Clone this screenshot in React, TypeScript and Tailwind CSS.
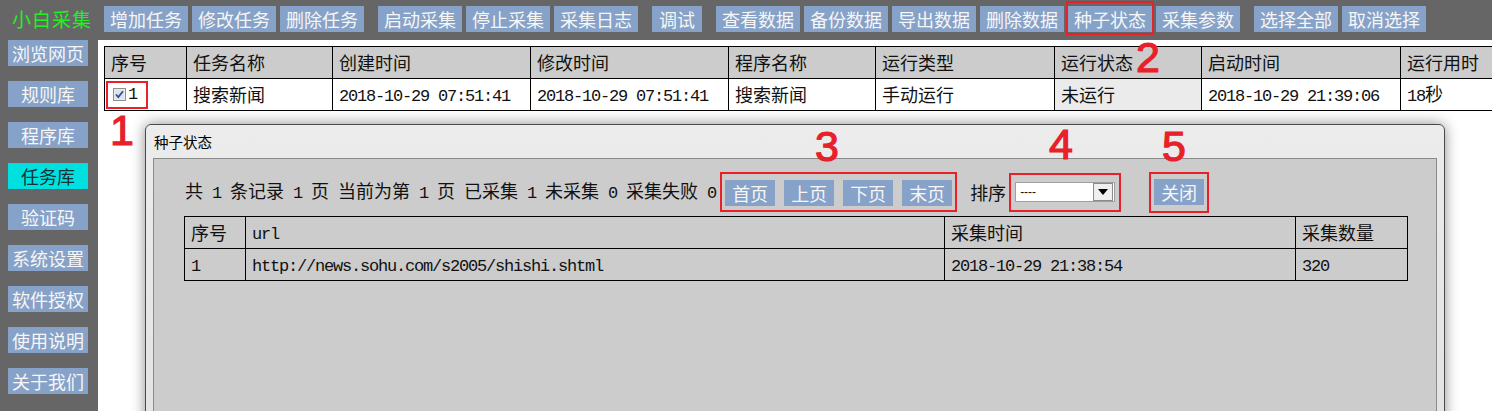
import type { ReactNode } from "react";

// half-width digits / latin, SimSun-like spacing (9px advance)
function M({ children }: { children: ReactNode }) {
  return (
    <span className="font-['Liberation_Mono',monospace] text-[17px] tracking-[-1.2px] whitespace-pre">
      {children}
    </span>
  );
}

function Btn({ label, w = "w-[84px]" }: { label: string; w?: string }) {
  return (
    <div
      className={`${w} h-[26px] bg-[#86a2c8] text-[#f6f6f6] text-[18px] leading-[26px] text-center`}
    >
      {label}
    </div>
  );
}

function Num({ n, className }: { n: string; className: string }) {
  return (
    <span
      className={`absolute font-['Liberation_Sans',Arial,sans-serif] text-[43px] leading-none text-[#e8202a] [-webkit-text-stroke:1.2px_#e8202a] ${className}`}
    >
      {n}
    </span>
  );
}

const side = ["浏览网页", "规则库", "程序库", "任务库", "验证码", "系统设置", "软件授权", "使用说明", "关于我们"];

function Checkbox() {
  return (
    <svg width="13" height="13" viewBox="0 0 13 13">
      <rect x="0.5" y="0.5" width="12" height="12" fill="#e8ebef" stroke="#8e8f8f" />
      <rect x="2" y="2" width="9" height="9" fill="#dfe4ea" />
      <path d="M3 6.5 L5.3 9 L10 3.2" fill="none" stroke="#2f4f9a" strokeWidth="1.8" />
    </svg>
  );
}

const th = "border border-black h-[32px] pl-[6px] text-left font-normal";
const td = "border border-black h-[32px] pl-[6px]";

export default function App() {
  return (
    <div className="relative w-[1492px] h-[411px] overflow-hidden bg-[#666666] font-['Noto_Sans_CJK_SC',sans-serif] text-[#111]">
      {/* top toolbar */}
      <div className="flex items-center h-[40px] pt-[6px] pb-[8px]">
        <div className="w-[104px] pl-[12px] text-[19px] text-[#22f022] tracking-[1px] whitespace-nowrap">
          小白采集
        </div>
        <div className="flex gap-[4px]">
          <Btn label="增加任务" />
          <Btn label="修改任务" />
          <Btn label="删除任务" />
        </div>
        <div className="flex gap-[4px] ml-[14px]">
          <Btn label="启动采集" />
          <Btn label="停止采集" />
          <Btn label="采集日志" />
        </div>
        <div className="ml-[14px]">
          <Btn label="调试" w="w-[50px]" />
        </div>
        <div className="flex gap-[4px] ml-[14px]">
          <Btn label="查看数据" />
          <Btn label="备份数据" />
          <Btn label="导出数据" />
          <Btn label="删除数据" />
          <div className="relative">
            <Btn label="种子状态" />
            <span className="absolute -left-[2px] -right-[2px] -top-[5px] -bottom-[3px] border-2 border-[#e8202a]" />
          </div>
          <Btn label="采集参数" />
        </div>
        <div className="flex gap-[4px] ml-[14px]">
          <Btn label="选择全部" />
          <Btn label="取消选择" />
        </div>
      </div>

      <div className="flex h-[371px]">
        {/* sidebar */}
        <div className="w-[98px] flex flex-col gap-[15px] pl-[8px]">
          {side.map((s) => (
            <div
              key={s}
              className={`w-[80px] h-[26px] text-[18px] leading-[26px] text-center whitespace-nowrap ${
                s === "任务库" ? "bg-[#00e0e0] text-[#113333]" : "bg-[#86a2c8] text-[#f6f6f6]"
              }`}
            >
              {s}
            </div>
          ))}
        </div>

        {/* main */}
        <div className="relative flex-1 bg-white overflow-hidden pt-[6px] pl-[6px]">
          <table className="table-fixed border-collapse w-[1416px] text-[18px]">
            <thead>
              <tr className="bg-[#cccccc]">
                <th className={`${th} w-[82px]`}>序号</th>
                <th className={`${th} w-[146px]`}>任务名称</th>
                <th className={`${th} w-[198px]`}>创建时间</th>
                <th className={`${th} w-[198px]`}>修改时间</th>
                <th className={`${th} w-[147px]`}>程序名称</th>
                <th className={`${th} w-[179px]`}>运行类型</th>
                <th className={`${th} w-[147px]`}>运行状态</th>
                <th className={`${th} w-[199px]`}>启动时间</th>
                <th className={`${th} w-[120px]`}>运行用时</th>
              </tr>
            </thead>
            <tbody>
              <tr>
                <td className="border border-black h-[32px] pl-[1px]">
                  <div className="flex items-center h-[28px] w-[42px] border-2 border-[#e8202a] pl-[5px] gap-[2px]">
                    <Checkbox />
                    <M>1</M>
                  </div>
                </td>
                <td className={td}>搜索新闻</td>
                <td className={td}>
                  <M>2018-10-29 07:51:41</M>
                </td>
                <td className={td}>
                  <M>2018-10-29 07:51:41</M>
                </td>
                <td className={td}>搜索新闻</td>
                <td className={td}>手动运行</td>
                <td className={`${td} bg-[#ebebeb]`}>未运行</td>
                <td className={td}>
                  <M>2018-10-29 21:39:06</M>
                </td>
                <td className={td}>
                  <M>18</M>秒
                </td>
              </tr>
            </tbody>
          </table>

          {/* dialog */}
          <div className="absolute left-[47px] top-[84px] w-[1300px] h-[330px] flex flex-col rounded-t-[6px] border border-[#4a4a4a] bg-linear-to-b from-[#ececec] to-[#e2e2e2] shadow-[0_0_14px_rgba(0,0,0,0.45)]">
            <div className="h-[33px] flex items-center pl-[8px] text-[14.5px] text-black">种子状态</div>
            <div className="flex-1 mx-[7px] border border-[#8a8a8a] bg-[#cccccc]">
              <div className="flex items-center h-[40px] mt-[13px] pl-[31px] text-[18px] whitespace-nowrap">
                <span>
                  共<M> 1 </M>条记录<M> 1 </M>页<M> </M>当前为第<M> 1 </M>页<M> </M>已采集<M> 1 </M>未采集<M> 0 </M>
                  采集失败<M> 0</M>
                </span>
                <div className="ml-[4px] flex gap-[9px] border-2 border-[#e8202a] px-[3px] pt-[6px] pb-[4px]">
                  <Btn label="首页" w="w-[50px]" />
                  <Btn label="上页" w="w-[50px]" />
                  <Btn label="下页" w="w-[50px]" />
                  <Btn label="末页" w="w-[50px]" />
                </div>
                <span className="ml-[13px]">排序</span>
                <div className="ml-[3px] h-[39px] w-[112px] flex items-center border-2 border-[#e8202a] pl-[4px]">
                  <div className="w-[100px] h-[20px] flex items-center bg-white border border-[#a0a0a0]">
                    <span className="flex-1 pl-[4px] text-[12px] leading-none font-['Liberation_Sans',sans-serif]">----</span>
                    <div className="w-[20px] h-[18px] mr-[1px] flex items-center justify-center bg-[#efefef] border border-[#8a8a8a]">
                      <svg width="10" height="6" viewBox="0 0 10 6">
                        <path d="M0 0 H10 L5 6 Z" fill="#000" />
                      </svg>
                    </div>
                  </div>
                </div>
                <div className="ml-[28px] h-[41px] flex items-center border-2 border-[#e8202a] px-[3px]">
                  <Btn label="关闭" w="w-[50px]" />
                </div>
              </div>

              <table className="ml-[30px] mt-[4px] table-fixed border-collapse w-[1223px] text-[18px]">
                <thead>
                  <tr>
                    <th className={`${th} w-[61px]`}>序号</th>
                    <th className={`${th} w-[699px]`}>
                      <M>url</M>
                    </th>
                    <th className={`${th} w-[351px]`}>采集时间</th>
                    <th className={`${th} w-[112px]`}>采集数量</th>
                  </tr>
                </thead>
                <tbody>
                  <tr>
                    <td className={td}>
                      <M>1</M>
                    </td>
                    <td className={td}>
                      <M>http://news.sohu.com/s2005/shishi.shtml</M>
                    </td>
                    <td className={td}>
                      <M>2018-10-29 21:38:54</M>
                    </td>
                    <td className={td}>
                      <M>320</M>
                    </td>
                  </tr>
                </tbody>
              </table>
            </div>
          </div>
        </div>
      </div>

      {/* annotation numbers */}
      <Num n="1" className="left-[110px] top-[109px]" />
      <Num n="2" className="left-[1136px] top-[36px]" />
      <Num n="3" className="left-[815px] top-[125px]" />
      <Num n="4" className="left-[1049px] top-[123px]" />
      <Num n="5" className="left-[1162px] top-[125px]" />
    </div>
  );
}
